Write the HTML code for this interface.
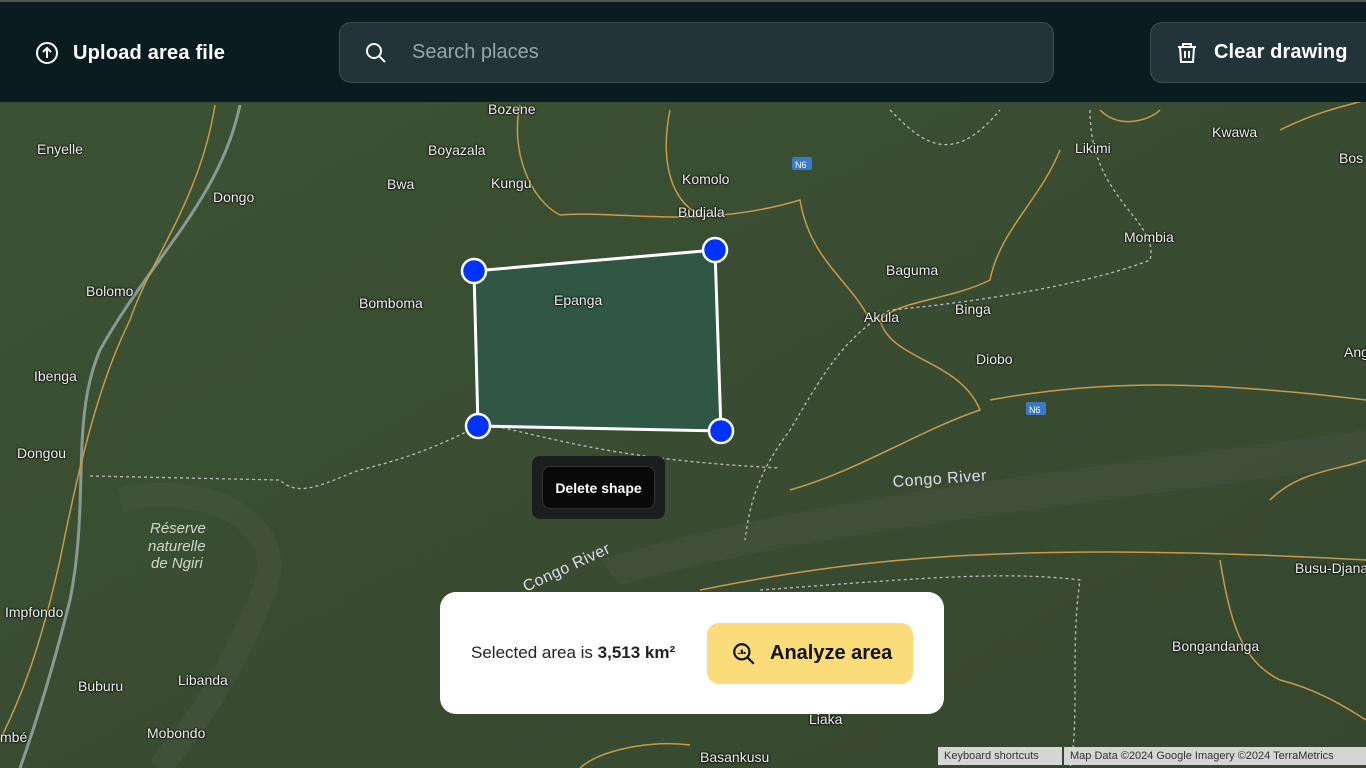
<!DOCTYPE html>
<html><head><meta charset="utf-8"><style>
*{margin:0;padding:0;box-sizing:border-box}
body{width:1366px;height:768px;overflow:hidden;background:#3a4b31;font-family:"Liberation Sans",sans-serif;position:relative}
#map{position:absolute;left:0;top:0}
.hdr{position:absolute;left:0;top:0;width:1366px;height:102px;background:#0b1c21;border-top:2px solid #555}
.up{position:absolute;left:35px;top:39px;color:#fff;font-weight:bold;font-size:20px;display:flex;align-items:center;gap:14px;letter-spacing:0.2px}
.search{position:absolute;left:339px;top:20px;width:715px;height:61px;border:1px solid #3e4c51;border-radius:12px;background:#22333a;display:flex;align-items:center}
.search span{color:#9aa5a8;font-size:20px;margin-left:72px}
.clear{position:absolute;left:1150px;top:20px;width:230px;height:61px;border:1px solid #3e4c51;border-radius:12px;background:#22333a;color:#fff;font-weight:bold;font-size:20px;display:flex;align-items:center;padding-left:63px;letter-spacing:0.1px}
.lbl{position:absolute;color:#eee;font-size:14px;white-space:nowrap;text-shadow:0 0 2px #000,0 0 2px #000}
.del{position:absolute;left:532px;top:456px;width:133px;height:63px;background:#1c1d1f;border-radius:8px}
.del div{position:absolute;left:10px;top:10px;width:113px;height:43px;background:#090909;border:1px solid #333;border-radius:8px;color:#fff;font-weight:bold;font-size:14px;display:flex;align-items:center;justify-content:center}
.panel{position:absolute;left:440px;top:592px;width:504px;height:122px;background:#fff;border-radius:16px}
.panel .t{position:absolute;left:31px;top:51px;font-size:17px;color:#222;white-space:nowrap}
.btn{position:absolute;left:267px;top:31px;width:206px;height:61px;background:#fadc7a;border-radius:12px;display:flex;align-items:center;font-size:20px;font-weight:bold;color:#111;padding-left:24px;gap:13px}
.attr{position:absolute;top:747px;height:18px;background:rgba(240,240,240,.85);font-size:11px;color:#333;padding:3px 6px;white-space:nowrap}
</style></head><body>
<svg id="map" width="1366" height="768">
<defs><linearGradient id="g" x1="0" y1="0" x2="1" y2="1"><stop offset="0" stop-color="#3d5234"/><stop offset="1" stop-color="#36472f"/></linearGradient></defs>
<rect width="1366" height="768" fill="url(#g)"/>
<path d="M600 560 C800 500 1000 480 1366 430 L1366 465 C1000 515 800 535 620 585 Z" fill="#4d5a48" opacity=".35"/>
<path d="M120 500 C200 480 300 520 260 600 C220 700 180 740 160 768" stroke="#4f5e4a" stroke-width="24" fill="none" opacity=".3"/>
<path d="M240 105 C220 200 150 260 100 350 C70 420 90 500 70 600 C50 680 30 740 20 768" stroke="#8a9a90" stroke-width="3" fill="none"/>
<g stroke="#c89a4a" stroke-width="1.5" fill="none">
<path d="M215 105 C200 200 150 260 130 320 C100 380 80 460 60 560 C40 650 20 700 0 740"/>
<path d="M520 105 C510 150 530 200 560 215 C620 210 700 230 800 200 C810 260 850 280 870 320"/>
<path d="M670 110 C660 160 670 200 700 215"/>
<path d="M1060 150 C1040 200 1000 230 990 280 C950 300 900 300 880 320 C890 360 960 360 980 410 C920 430 860 470 790 490"/>
<path d="M990 400 C1100 380 1200 380 1366 400"/>
<path d="M700 590 C850 560 1000 540 1366 560"/>
<path d="M1220 560 C1230 620 1240 660 1280 680 C1320 690 1350 710 1366 720"/>
<path d="M1270 500 C1300 470 1340 470 1366 460"/>
<path d="M1280 130 C1320 110 1350 105 1366 100"/>
<path d="M1100 110 C1120 130 1150 120 1160 110"/>
<path d="M580 768 C600 750 650 740 690 745"/>
</g>
<g stroke="#bbb" stroke-width="1.3" fill="none" stroke-dasharray="3 3">
<path d="M90 476 L280 480 C300 500 330 480 360 470 C400 460 430 450 470 430"/>
<path d="M490 425 C560 440 620 460 780 468"/>
<path d="M890 110 C920 140 950 170 1000 110"/>
<path d="M1090 110 C1090 200 1160 220 1150 260 C1100 280 1000 300 890 310 C840 340 820 380 790 430 C760 470 750 500 745 540"/>
<path d="M760 590 C900 580 1000 570 1080 580 C1070 650 1080 720 1070 768"/>
</g>
<polygon points="474,271 715,250 721,431 478,426" fill="#2e5a4d" fill-opacity=".75" stroke="#fff" stroke-width="3"/>
<g fill="#0033ff" stroke="#fff" stroke-width="2.5"><circle cx="474" cy="271" r="12"/><circle cx="715" cy="250" r="12"/><circle cx="721" cy="431" r="12"/><circle cx="478" cy="426" r="12"/></g>
<rect x="792" y="157" width="20" height="13" rx="2" fill="#3a78c8"/><text x="795" y="168" font-size="9" fill="#fff" font-family="Liberation Sans">N6</text>
<rect x="1026" y="402" width="20" height="13" rx="2" fill="#3a78c8"/><text x="1029" y="413" font-size="9" fill="#fff" font-family="Liberation Sans">N6</text>
<text x="893" y="487" font-size="16" fill="#dde" font-family="Liberation Sans" transform="rotate(-4 893 487)" letter-spacing="0.5">Congo River</text>
<text x="526" y="592" font-size="16" fill="#dde" font-family="Liberation Sans" transform="rotate(-25 526 592)" letter-spacing="0.5">Congo River</text>
<text x="150" y="533" font-size="15" fill="#cfd8cc" font-style="italic" font-family="Liberation Sans">Réserve</text>
<text x="148" y="551" font-size="15" fill="#cfd8cc" font-style="italic" font-family="Liberation Sans">naturelle</text>
<text x="151" y="568" font-size="15" fill="#cfd8cc" font-style="italic" font-family="Liberation Sans">de Ngiri</text>
</svg>
<div class="lbl" style="left:37px;top:141px">Enyelle</div>
<div class="lbl" style="left:213px;top:189px">Dongo</div>
<div class="lbl" style="left:86px;top:283px">Bolomo</div>
<div class="lbl" style="left:34px;top:368px">Ibenga</div>
<div class="lbl" style="left:17px;top:445px">Dongou</div>
<div class="lbl" style="left:5px;top:604px">Impfondo</div>
<div class="lbl" style="left:78px;top:678px">Buburu</div>
<div class="lbl" style="left:178px;top:672px">Libanda</div>
<div class="lbl" style="left:147px;top:725px">Mobondo</div>
<div class="lbl" style="left:0;top:729px">mbé</div>
<div class="lbl" style="left:488px;top:101px">Bozene</div>
<div class="lbl" style="left:428px;top:142px">Boyazala</div>
<div class="lbl" style="left:387px;top:176px">Bwa</div>
<div class="lbl" style="left:491px;top:175px">Kungu</div>
<div class="lbl" style="left:359px;top:295px">Bomboma</div>
<div class="lbl" style="left:554px;top:292px">Epanga</div>
<div class="lbl" style="left:682px;top:171px">Komolo</div>
<div class="lbl" style="left:678px;top:204px">Budjala</div>
<div class="lbl" style="left:886px;top:262px">Baguma</div>
<div class="lbl" style="left:864px;top:309px">Akula</div>
<div class="lbl" style="left:955px;top:301px">Binga</div>
<div class="lbl" style="left:976px;top:351px">Diobo</div>
<div class="lbl" style="left:1075px;top:140px">Likimi</div>
<div class="lbl" style="left:1212px;top:124px">Kwawa</div>
<div class="lbl" style="left:1124px;top:229px">Mombia</div>
<div class="lbl" style="left:1339px;top:150px">Bos</div>
<div class="lbl" style="left:1344px;top:344px">Ang</div>
<div class="lbl" style="left:1295px;top:560px">Busu-Djana</div>
<div class="lbl" style="left:1172px;top:638px">Bongandanga</div>
<div class="lbl" style="left:809px;top:711px">Liaka</div>
<div class="lbl" style="left:700px;top:749px">Basankusu</div>
<div class="hdr">
 <div class="up"><svg width="24" height="24" viewBox="0 0 24 24" fill="none" stroke="#fff" stroke-width="2"><circle cx="12" cy="12" r="10"/><path d="M12 17V7M8 11l4-4 4 4"/></svg>Upload area file</div>
 <div class="search"><svg style="position:absolute;left:24px" width="24" height="24" viewBox="0 0 24 24" fill="none" stroke="#fff" stroke-width="2"><circle cx="10" cy="10" r="7"/><path d="M15 15l6 6"/></svg><span>Search places</span></div>
 <div class="clear"><svg style="position:absolute;left:24px" width="24" height="24" viewBox="0 0 24 24" fill="none" stroke="#fff" stroke-width="2"><path d="M3 6h18M8 6V3h8v3M5 6l1 15h12l1-15M10 10v7M14 10v7"/></svg>Clear drawing</div>
</div>
<div class="del"><div>Delete shape</div></div>
<div class="panel"><div class="t">Selected area is <b>3,513 km²</b></div>
<div class="btn"><svg width="26" height="26" viewBox="0 0 24 24" fill="none" stroke="#111" stroke-width="2"><circle cx="10" cy="10" r="7"/><path d="M15 15l6 6M7.5 12v-1M10 12V8M12.5 12v-2"/></svg>Analyze area</div></div>
<div class="attr" style="left:938px;width:124px">Keyboard shortcuts</div>
<div class="attr" style="left:1064px;width:302px">Map Data ©2024 Google Imagery ©2024 TerraMetrics</div>
</body></html>
